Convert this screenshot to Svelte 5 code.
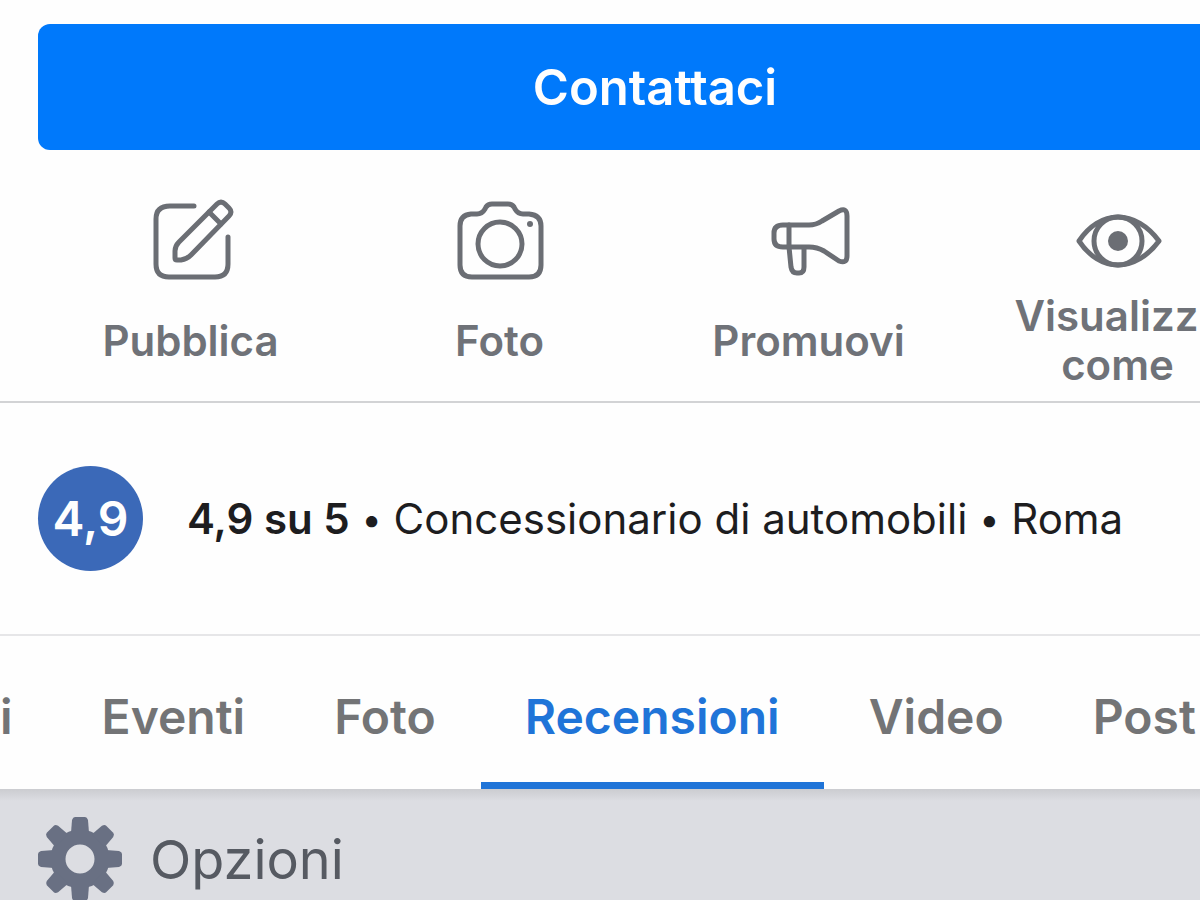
<script>
  const actions = [
    { id: 'publish', lines: ['Pubblica'] },
    { id: 'photo', lines: ['Foto'] },
    { id: 'promote', lines: ['Promuovi'] },
    { id: 'view', lines: ['Visualizz', 'come'] }
  ]

  const tabs = ['i', 'Eventi', 'Foto', 'Recensioni', 'Video', 'Post']
  const teeth = [0, 45, 90, 135, 180, 225, 270, 315]

  let active = $state('Recensioni')
</script>

<div class="screen">
  <div class="page">
    <div class="cta">
      <button class="contact">Contattaci</button>
    </div>

    <div class="actions">
      {#each actions as action (action.id)}
        <button class="action">
          <svg class="icon" viewBox="-1 0 88 88" aria-hidden="true">
            {#if action.id === 'publish'}
              <path d="M46 9H22Q8 9 8 22V67Q8 80 21 80H67Q80 80 80 67V40" />
              <path d="M27 61V54Q27 49 31 45L69 7Q73 3 77 7L81 11Q85 15 81 19L43 58Q39 62 33 63H29Q27 63 27 61Z" />
              <path d="M61 15L73 27" />
            {:else if action.id === 'photo'}
              <path d="M14 17H20Q25 17 28 12L29 10Q31 7 35 7H51Q55 7 57 10L58 12Q61 17 66 17H72Q84 18 84 29V68Q84 80 72 80H15Q3 80 3 68V29Q3 18 14 17Z" />
              <circle cx="43" cy="47" r="22" />
              <circle class="solid" cx="73" cy="27" r="3" />
            {:else if action.id === 'promote'}
              <path d="M17 28H43Q50 28 56 24L73 14Q81 10 81 19V59Q81 67 73 64L58 54Q51 50 43 50H17Q8 50 8 42V36Q8 28 17 28Z" />
              <path d="M23 28V50L25 70Q26 76 31 76H33Q38 76 38 70V51" />
            {:else}
              <path d="M4 44C14 29 28 20 43 20S73 29 84 44C73 59 58 68 43 68S14 59 4 44Z" />
              <circle cx="43" cy="44" r="24" />
              <circle class="solid" cx="43" cy="44" r="10" />
            {/if}
          </svg>
          <span class="label" class:wrapped={action.lines.length > 1}>
            {#each action.lines as line}
              <span>{line}</span>
            {/each}
          </span>
        </button>
      {/each}
    </div>

    <div class="rating">
      <span class="score">4,9</span>
      <p>
        <strong>4,9 su 5</strong> <span class="dot">•</span> Concessionario di automobili
        <span class="dot">•</span> Roma
      </p>
    </div>

    <nav class="tabs">
      {#each tabs as tab (tab)}
        <button class="tab" class:active={active === tab} onclick={() => (active = tab)}>{tab}</button>
      {/each}
    </nav>

    <button class="options">
      <svg class="gear" viewBox="-42 -42 84 84" aria-hidden="true">
        <circle r="22" />
        {#each teeth as angle}
          <path d="M-9 -26L-8 -39Q-7 -42 -5 -42H5Q7 -42 8 -39L9 -26Z" transform="rotate({angle})" />
        {/each}
      </svg>
      Opzioni
    </button>
  </div>
</div>

<style>
  :global(body) { margin: 0; }

  .screen { height: 100vh; overflow: hidden; background: #dcdde2; }

  /* the page is wider than the window and runs off its right edge */
  .page {
    width: calc(100% + 108px);
    font-family: Inter, Roboto, sans-serif;
    background: #fefefe;
  }

  button {
    margin: 0; padding: 0; border: none; background: none;
    font-family: inherit; cursor: pointer;
  }

  .cta { padding: 24px 36px 0 38px; }
  .contact {
    width: 100%; height: 126px; border-radius: 12px;
    background: #0079fb; color: #fefefe;
    font-size: 49px; font-weight: 600;
  }

  .actions {
    display: grid; grid-template-columns: repeat(4, 1fr);
    padding: 47px 36px 12px;
    border-bottom: 2px solid #d2d3d5;
  }
  .action { display: flex; flex-direction: column; align-items: center; gap: 6px; }
  .icon {
    width: 88px; height: 88px;
    fill: none; stroke: #6b6e74; stroke-width: 5;
    stroke-linecap: round; stroke-linejoin: round;
  }
  .icon .solid { fill: #6b6e74; stroke: none; }
  .label {
    display: flex; flex-direction: column; align-items: center; justify-content: center;
    width: 206px; min-height: 98px;
    color: #6f7278; font-size: 42px; font-weight: 600; line-height: 49px;
  }
  .label.wrapped span:first-child { align-self: flex-start; }

  .rating {
    display: flex; align-items: center; gap: 44px;
    padding: 63px 38px;
    border-bottom: 2px solid #e6e6e8;
  }
  .score {
    display: flex; align-items: center; justify-content: center;
    width: 105px; height: 105px; border-radius: 50%;
    background: #3b69b8; color: #fefefe;
    font-size: 48px; font-weight: 600;
  }
  .rating p { margin: 0; color: #1d1d1f; font-size: 42px; white-space: nowrap; }
  .rating strong { font-weight: 600; }
  .dot { font-size: 36px; vertical-align: 2px; line-height: 1; }

  .tabs { display: flex; gap: 1px; margin-left: -44px; }
  .tab {
    padding: 14px 44px 0; height: 153px;
    border-bottom: 7px solid transparent;
    color: #737476; font-size: 48px; font-weight: 600;
  }
  .tab.active { color: #1f74d8; border-bottom-color: #1f74d8; }

  .options {
    display: flex; align-items: center; gap: 28px;
    width: 100%; padding: 28px 38px;
    background: linear-gradient(#cbccd0, #dcdde2 12px);
    color: #565a62; font-size: 54px;
  }
  .gear { width: 84px; height: 84px; fill: #697083; }
  .gear circle { fill: none; stroke: #697083; stroke-width: 15; }
</style>
